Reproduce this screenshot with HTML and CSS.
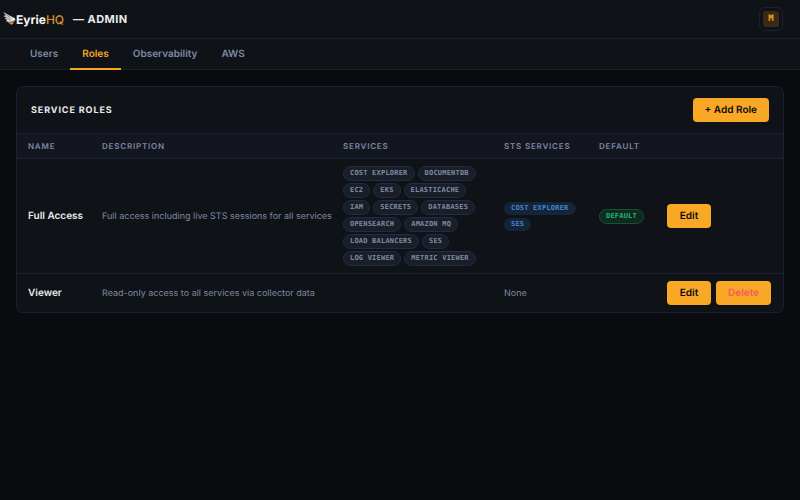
FILE: index.html
```html
<!DOCTYPE html>
<html lang="en">
<head>
  <meta charset="UTF-8" />
  <title>EyrieHQ - Admin</title>
  <meta name="viewport" content="width=device-width, initial-scale=1.0" />
  <link rel="stylesheet" href="styles.css">
</head>
<body>
  <header class="topbar">
    <a class="brand" href="#">
      <svg class="brand-icon" viewBox="0 0 12 14" aria-hidden="true">
        <path d="M0 0 L5 3 L9 5 L11 8 L9 10 L5 10 L2 9 L4 8 L1 6.5 L3 6 L0 4 L2 3.5 Z" fill="#d9d9d6"/>
        <path d="M1 1.5 L7 6 M1.5 4.5 L7 8" stroke="#55585c" stroke-width=".6" fill="none"/>
        <path d="M9 5 L11 6 L12 8 L10 9 Z" fill="#f2f2ee"/>
        <path d="M4 10 L11 9 L10 11 L8 12 L6 11.5 Z" fill="#a9702c"/>
        <path d="M6 11 L8 13 L10 11" fill="#d99a3d"/>
      </svg>
      <span class="brand-name">Eyrie<span class="brand-hq">HQ</span></span>
    </a>
    <h1 class="page-title">— ADMIN</h1>
    <button class="user-btn" type="button" aria-label="Account"><span class="avatar">M</span></button>
  </header>

  <nav class="tabs">
    <a class="tab" href="#">Users</a>
    <a class="tab active" href="#">Roles</a>
    <a class="tab" href="#">Observability</a>
    <a class="tab" href="#">AWS</a>
  </nav>

  <main>
    <section class="card">
      <div class="card-header">
        <h2>SERVICE ROLES</h2>
        <button class="btn" type="button">+ Add Role</button>
      </div>
      <table>
        <colgroup>
          <col class="col-name">
          <col>
          <col class="col-services">
          <col class="col-sts">
          <col class="col-default">
          <col class="col-actions">
        </colgroup>
        <thead>
          <tr>
            <th>NAME</th>
            <th>DESCRIPTION</th>
            <th>SERVICES</th>
            <th>STS SERVICES</th>
            <th>DEFAULT</th>
            <th></th>
          </tr>
        </thead>
        <tbody>
          <tr>
            <td class="name">Full Access</td>
            <td>Full access including live STS sessions for all services</td>
            <td>
              <div class="tags">
                <span class="tag">COST EXPLORER</span>
                <span class="tag">DOCUMENTDB</span>
                <span class="tag">EC2</span>
                <span class="tag">EKS</span>
                <span class="tag">ELASTICACHE</span>
                <span class="tag">IAM</span>
                <span class="tag">SECRETS</span>
                <span class="tag">DATABASES</span>
                <span class="tag">OPENSEARCH</span>
                <span class="tag">AMAZON MQ</span>
                <span class="tag">LOAD BALANCERS</span>
                <span class="tag">SES</span>
                <span class="tag">LOG VIEWER</span>
                <span class="tag">METRIC VIEWER</span>
              </div>
            </td>
            <td>
              <div class="tags sts">
                <span class="tag tag-blue">COST EXPLORER</span>
                <span class="tag tag-blue">SES</span>
              </div>
            </td>
            <td><div class="tags"><span class="tag tag-green">DEFAULT</span></div></td>
            <td>
              <div class="actions">
                <button class="btn" type="button">Edit</button>
              </div>
            </td>
          </tr>
          <tr>
            <td class="name">Viewer</td>
            <td>Read-only access to all services via collector data</td>
            <td></td>
            <td>None</td>
            <td></td>
            <td>
              <div class="actions">
                <button class="btn" type="button">Edit</button>
                <button class="btn btn-danger" type="button">Delete</button>
              </div>
            </td>
          </tr>
        </tbody>
      </table>
    </section>
  </main>
</body>
</html>
```
FILE: styles.css
```css
* {
  box-sizing: border-box;
}

body {
  margin: 0;
  background: #0a0b0f;
  color: #e8eaed;
  font-family: Inter, "Liberation Sans", sans-serif;
  font-size: 9px;
  text-rendering: geometricPrecision;
}

a {
  text-decoration: none;
}

button {
  font-family: inherit;
  text-rendering: inherit;
  cursor: pointer;
}

.topbar {
  display: flex;
  align-items: center;
  height: 39px;
  padding: 0 17px 0 3px;
  background: #0f1216;
  border-bottom: 1px solid #1c2036;
}

.brand {
  display: flex;
  align-items: center;
  color: #f4f4f2;
}

.brand-icon {
  width: 13px;
  height: 14px;
}

.brand-name {
  font-size: 12px;
  font-weight: 700;
}

.brand-hq {
  color: #d9962f;
  font-weight: 500;
}

.page-title {
  margin: 0 auto 0 9px;
  font-size: 11px;
  font-weight: 700;
  letter-spacing: 0.04em;
}

.user-btn {
  display: flex;
  align-items: center;
  justify-content: center;
  width: 24px;
  height: 24px;
  padding: 0;
  background: #0f1216;
  border: 1px solid #1c2036;
  border-radius: 6px;
}

.avatar {
  width: 16px;
  height: 16px;
  border-radius: 3px;
  background: #3a2a14;
  color: #f5a623;
  font-family: "DejaVu Sans Mono", monospace;
  font-size: 9px;
  font-weight: 700;
  line-height: 16px;
}

.tabs {
  display: flex;
  height: 31px;
  padding: 0 18px;
  background: #0f1216;
  border-bottom: 1px solid #1a2030;
}

.tab {
  height: 31px;
  padding: 0 12px;
  border-bottom: 2px solid transparent;
  color: #7d8aa5;
  font-size: 10px;
  font-weight: 600;
  line-height: 30px;
}

.tab.active {
  color: #f5a623;
  border-bottom-color: #f5a623;
}

main {
  padding: 16px;
}

.card {
  background: #0f1216;
  border: 1px solid #1a2036;
  border-radius: 7px;
  overflow: hidden;
}

.card-header {
  display: flex;
  align-items: center;
  justify-content: space-between;
  padding: 11px 14px;
}

h2 {
  margin: 0;
  font-size: 9px;
  font-weight: 700;
  letter-spacing: 0.1em;
}

.btn {
  min-width: 44px;
  height: 24px;
  padding: 0 12px;
  border: 0;
  border-radius: 4px;
  background: #f9a825;
  color: #0a0b0f;
  font-size: 10px;
  font-weight: 600;
}

.btn-danger {
  color: #f45b5b;
}

table {
  width: 100%;
  table-layout: fixed;
  border-collapse: collapse;
}

.col-name { width: 74px; }
.col-services { width: 161px; }
.col-sts { width: 95px; }
.col-default { width: 68px; }
.col-actions { width: 127px; }

th {
  height: 25px;
  padding: 0 11px;
  background: #14161f;
  border-top: 1px solid #1c2036;
  color: #7d8aa5;
  font-size: 8px;
  font-weight: 600;
  letter-spacing: 0.1em;
  text-align: left;
  white-space: nowrap;
}

td {
  padding: 7px 11px;
  border-top: 1px solid #1c2036;
  color: #7d8aa5;
  font-size: 9px;
  white-space: nowrap;
}

.name {
  color: #e8eaed;
  font-size: 10px;
  font-weight: 600;
}

.tags {
  display: flex;
  flex-wrap: wrap;
  gap: 2px 3px;
}

.sts {
  row-gap: 3px;
}

.tag {
  height: 15px;
  padding: 0 6px;
  border: 1px solid #232b45;
  border-radius: 8px;
  background: #1a1e27;
  color: #7d8aa5;
  font-family: "DejaVu Sans Mono", monospace;
  font-size: 7px;
  font-weight: 700;
  letter-spacing: 0.03em;
  line-height: 13px;
}

.tag-blue {
  height: 13px;
  padding: 0 7px;
  border: 0;
  background: #152436;
  color: #4285d6;
}

.tag-green {
  border-color: #145237;
  background: #102a22;
  color: #1fb573;
}

.actions {
  display: flex;
  gap: 5px;
}
```
